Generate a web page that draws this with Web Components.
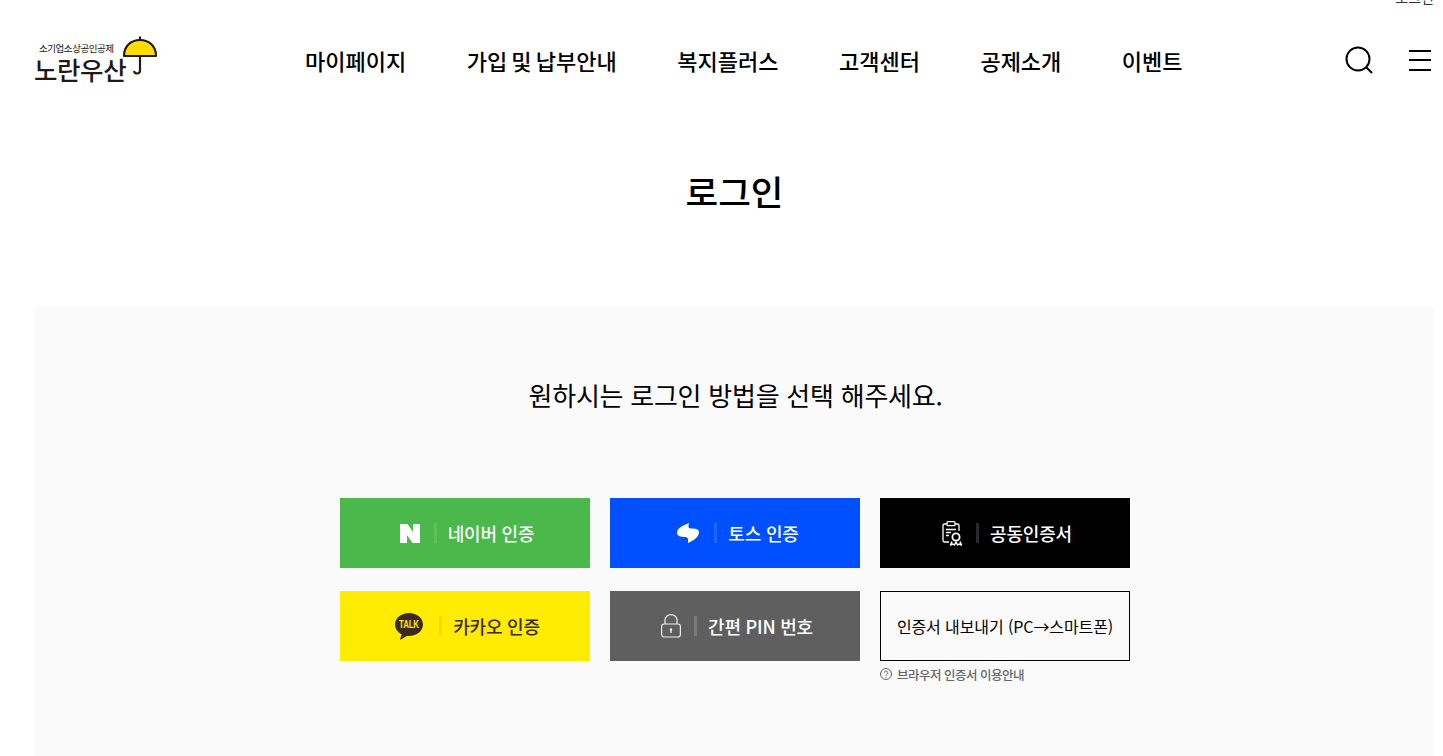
<!DOCTYPE html>
<html lang="ko">
<head>
<meta charset="utf-8">
<title>노란우산 로그인</title>
<style>
html, body { margin: 0; padding: 0; height: 100%; overflow: hidden; background: #fff; }
body { font-family: "Noto Sans CJK KR", "Noto Sans", sans-serif; color: #000; }
</style>
</head>
<body>
<login-page></login-page>

<script>
const ICONS = {
    naver: `<svg width="20" height="19" viewBox="0 0 20 19"><path fill="#fff" d="M0 0h7.500l5.500 8V0h7v19h-7.500L7 11v8H0z"/></svg>`,
    toss: `<svg width="22" height="20" viewBox="0 0 22 20"><path fill="#fff" d="M12 0C8 2 0 4 0 10c0 3 4 4 8 4 2 0 3 1 3 2.500V20c4-2 11-5 11-11 0-3-4-3.500-7-3.500-2.500 0-4-.5-3.500-2.500z"/></svg>`,
    cert: `<svg width="22" height="25" viewBox="0 0 22 25" fill="none" stroke="#fff" stroke-width="1.300"><path d="M6 3H3.500Q2 3 2 4.500v15Q2 21 3.500 21H8"/><path d="M14 3h2.500Q18 3 18 4.500V10"/><rect x="6" y=".7" width="8" height="4" rx="1"/><path d="M5 8.500h10M5 11.500h5M5 14.500h3"/><circle cx="15" cy="16" r="3.600" stroke-width="1.800"/><path d="M11 20.500l-1.500 3.500 2.500-1 1.500 1 1.500-3 1.500 3 1.500-1 2.500 1-1.500-3.500" stroke-width="1.500" stroke-linejoin="round"/></svg>`,
    talk: `<svg width="28" height="27" viewBox="0 0 28 27"><path fill="#3c2a20" d="M14 0C6.300 0 0 5.100 0 11.500 0 15.600 2.600 19.200 6.500 21.200L5 27l6.800-4.100c.7.100 1.500.1 2.200.1 7.700 0 14-5.100 14-11.500S21.700 0 14 0z"/><text transform="translate(14 15.300) scale(.75 1)" text-anchor="middle" font-family="'Liberation Sans',sans-serif" font-size="10.500" font-weight="700" fill="#ffec00">TALK</text></svg>`,
    lock: `<svg width="20" height="24" viewBox="0 0 20 24" fill="none" stroke="#eee" stroke-width="1.200"><rect x=".6" y="10" width="18.800" height="13" rx="2.500"/><path d="M4 10V6a6 5.400 0 0 1 12 0v4"/><circle cx="10" cy="15.500" r="1.200" fill="#eee" stroke="none"/><path d="M10 16v3" stroke-width="1.400"/></svg>`
};

class SiteLogo extends HTMLElement {
    constructor() {
        super();
        this.attachShadow({ mode: "open" });
        this.shadowRoot.innerHTML = `
            <style>
                :host { display: flex; align-items: flex-start; width: 124px; height: 50px; color: #231815; }
                .words { display: flex; flex-direction: column; width: 88px; margin-left: -1px; padding-top: 6px; }
                .sub { font-size: 9.500px; line-height: 11px; padding-left: 5px; letter-spacing: -.45px; white-space: nowrap; }
                .main { font-size: 25.500px; font-weight: 500; line-height: 30px; letter-spacing: -.4px; white-space: nowrap; }
                svg { flex: none; margin-top: -2px; }
            </style>
            <div class="words"><span class="sub">소기업소상공인공제</span><span class="main">노란우산</span></div>
            <svg width="36" height="42" viewBox="0 0 36 42">
                <path d="M2 21C2 11 9 5 18 5s16 6 16 16z" fill="#ffdd00" stroke="#231815" stroke-width="2.200" stroke-linejoin="round"/>
                <path d="M18 1.500V5M18 21v14.500q0 3-3 3-2.500 0-3-2.500" fill="none" stroke="#231815" stroke-width="2.200"/>
            </svg>
        `;
    }
}

class MainNav extends HTMLElement {
    constructor() {
        super();
        this.attachShadow({ mode: "open" });
        this.shadowRoot.innerHTML = `
            <style>
                :host { display: flex; gap: 60.500px; font-size: 22px; font-weight: 500; line-height: 32px; word-spacing: -2px; white-space: nowrap; }
            </style>
            <slot></slot>
        `;
    }
}

class SiteHeader extends HTMLElement {
    constructor() {
        super();
        this.attachShadow({ mode: "open" });
        this.shadowRoot.innerHTML = `
            <style>
                :host { display: block; }
                .util { display: flex; justify-content: flex-end; align-items: flex-end; height: 6px; overflow: hidden; font-size: 14px; line-height: 18px; color: #333; }
                .bar { display: flex; align-items: center; height: 112px; padding: 0 3px 0 35px; }
                main-nav { margin: 0 0 4px 146px; }
                .tools { display: flex; align-items: center; margin: 0 0 4px auto; gap: 36px; }
                svg { display: block; }
            </style>
            <div class="util"><span>로그인</span></div>
            <div class="bar">
                <site-logo></site-logo>
                <main-nav>
                    <span>마이페이지</span><span>가입 및 납부안내</span><span>복지플러스</span><span>고객센터</span><span>공제소개</span><span>이벤트</span>
                </main-nav>
                <div class="tools">
                    <svg width="28" height="28" viewBox="0 0 28 28" fill="none" stroke="#000" stroke-width="2"><circle cx="13" cy="13" r="11.500"/><path d="M21 21l6 6"/></svg>
                    <svg width="22" height="21" viewBox="0 0 22 21" fill="#000"><rect width="22" height="2"/><rect y="9" width="22" height="2"/><rect y="19" width="22" height="2"/></svg>
                </div>
            </div>
        `;
    }
}

class AuthButton extends HTMLElement {
    constructor() {
        super();
        this.attachShadow({ mode: "open" });
        const icon = ICONS[this.getAttribute("icon")] || "";
        this.shadowRoot.innerHTML = `
            <style>
                :host { display: flex; align-items: center; justify-content: center; box-sizing: border-box; width: 250px; height: 70px; padding-left: var(--pad, 4px); background: var(--bg); color: var(--fg, #fff); font-size: 18px; font-weight: 500; letter-spacing: -.2px; white-space: nowrap; }
                .icon { display: flex; }
                .sep { width: 3px; height: 20px; margin: 0 11px 0 var(--sep-gap, 14px); background: var(--sep, rgba(255,255,255,.12)); }
            </style>
            <span class="icon">${icon}</span><span class="sep"></span><slot></slot>
        `;
    }
}

class ExportButton extends HTMLElement {
    constructor() {
        super();
        this.attachShadow({ mode: "open" });
        this.shadowRoot.innerHTML = `
            <style>
                :host { display: flex; align-items: center; justify-content: center; box-sizing: border-box; width: 250px; height: 70px; border: 1px solid #000; font-size: 16px; letter-spacing: -.1px; white-space: nowrap; }
            </style>
            <slot></slot>
        `;
    }
}

class LoginPanel extends HTMLElement {
    constructor() {
        super();
        this.attachShadow({ mode: "open" });
        this.shadowRoot.innerHTML = `
            <style>
                :host { display: block; height: 450px; margin-left: 35px; background: #fafafa; }
                p { margin: 0; padding: 71px 0 0 2px; height: 121px; font-size: 26px; line-height: 36px; letter-spacing: -.25px; text-align: center; }
                .grid { display: grid; grid-template-columns: repeat(3, 250px); column-gap: 20px; row-gap: 23px; margin-left: 305px; }
                .help { grid-column: 3; display: flex; align-items: center; gap: 5px; height: 18px; margin-top: -19px; font-size: 12.500px; font-weight: 500; letter-spacing: -.5px; color: #666; }
                svg { display: block; }
            </style>
            <p>원하시는 로그인 방법을 선택 해주세요.</p>
            <div class="grid">
                <auth-button icon="naver" style="--bg:#4ab84a">네이버 인증</auth-button>
                <auth-button icon="toss" style="--bg:#0050ff;--sep-gap:15px;--pad:6px">토스 인증</auth-button>
                <auth-button icon="cert" style="--bg:#000;--sep:#2a2a2a;--sep-gap:13px;--pad:3px">공동인증서</auth-button>
                <auth-button icon="talk" style="--bg:#ffec00;--fg:#3c2a20;--sep:rgba(60,42,32,.08);--sep-gap:16px;--pad:5px">카카오 인증</auth-button>
                <auth-button icon="lock" style="--bg:#5f5f5f;--sep:rgba(255,255,255,.17);--sep-gap:13px">간편 PIN 번호</auth-button>
                <export-button>인증서 내보내기 (PC→스마트폰)</export-button>
                <div class="help">
                    <svg width="12" height="12" viewBox="0 0 12 12" fill="none" stroke="#666"><circle cx="6" cy="6" r="5.500"/><path d="M4.300 4.800a1.700 1.700 0 1 1 2.500 1.500C6.200 6.700 6 7 6 7.800M6 8.800v1"/></svg>
                    <span>브라우저 인증서 이용안내</span>
                </div>
            </div>
        `;
    }
}

class LoginPage extends HTMLElement {
    constructor() {
        super();
        this.attachShadow({ mode: "open" });
        this.shadowRoot.innerHTML = `
            <style>
                :host { display: block; width: 1434px; height: 756px; overflow: hidden; }
                h1 { box-sizing: border-box; margin: 0; padding: 48px 0 0 35px; height: 188px; font-size: 35.500px; font-weight: 500; line-height: 50px; text-align: center; }
            </style>
            <site-header></site-header>
            <h1>로그인</h1>
            <login-panel></login-panel>
        `;
    }
}

customElements.define("site-logo", SiteLogo);
customElements.define("main-nav", MainNav);
customElements.define("site-header", SiteHeader);
customElements.define("auth-button", AuthButton);
customElements.define("export-button", ExportButton);
customElements.define("login-panel", LoginPanel);
customElements.define("login-page", LoginPage);
</script>
</body>
</html>
